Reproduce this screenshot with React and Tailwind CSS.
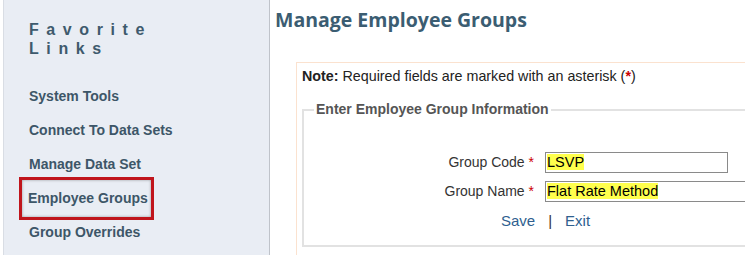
import React from 'react';

const links = ['System Tools', 'Connect To Data Sets', 'Manage Data Set', 'Employee Groups', 'Group Overrides'];

export default function App() {
    return (
        <div className="flex h-[255px] w-[745px] overflow-hidden bg-white pl-[3px] font-['Liberation_Sans',Arial,sans-serif]">
            {/* sidebar */}
            <div className="w-[267px] shrink-0 border-l border-r border-l-[#d9dde4] border-r-[#bfc3ca] bg-[#e9edf4] pt-[20px]">
                <div className="pl-[25px] text-[16px] font-bold leading-[19px] tracking-[7.6px] text-[#3e5a6d]">
                    <div>Favorite</div>
                    <div>Links</div>
                </div>
                <div className="mt-[21px] flex flex-col">
                    {links.map(l => (
                        <div key={l} className="h-[34px] flex items-center pl-[15px]">
                            {l === 'Employee Groups' ? (
                                <span className="border-[3px] border-[#c0151c] pl-[6px] pr-[3px] py-[8px] text-[14px] font-bold text-[#3d5668] shadow-[inset_0_0_3px_rgba(0,0,0,0.35)]">{l}</span>
                            ) : (
                                <span className="pl-[10px] text-[14px] font-bold text-[#3d5668]">{l}</span>
                            )}
                        </div>
                    ))}
                </div>
            </div>

            {/* main */}
            <div className="flex-1 pl-[5px]">
                <h1 className="mt-[7px] font-['Open_Sans',sans-serif] text-[19.5px] font-bold leading-[26px] text-[#3b5d72]">Manage Employee Groups</h1>
                <div className="ml-[21px] mt-[29px] h-[200px] border-l border-t border-[#fbe2cf] pl-[5px] pt-[3px]">
                    <p className="text-[14.3px] text-[#222]"><b>Note:</b> Required fields are marked with an asterisk (<span className="font-bold text-[#c00]">*</span>)</p>
                    <fieldset className="mt-[12px] h-[148px] border-2 border-r-0 border-[#e2e2e2] pl-[10px]">
                        <legend className="px-[2px] text-[14px] font-bold text-[#555]">Enter Employee Group Information</legend>
                        <div className="mt-[32px] grid grid-cols-[220px_1fr] gap-y-[8px] items-center text-[14px] text-[#333]">
                            <div className="text-right">Group Code <span className="text-[#c00]">*</span></div>
                            <div className="pl-[11px]">
                                <div className="h-[21px] w-[183px] border border-[#8a8a8a] px-[1px] text-[14.5px] leading-[19px] text-black"><span className="bg-[#ffff4d]">LSVP</span></div>
                            </div>
                            <div className="text-right">Group Name <span className="text-[#c00]">*</span></div>
                            <div className="pl-[11px]">
                                <div className="h-[21px] w-[260px] border border-[#8a8a8a] px-[1px] text-[14.5px] leading-[19px] text-black"><span className="bg-[#ffff4d]">Flat Rate Method</span></div>
                            </div>
                        </div>
                        <div className="mt-[8px] pl-[187px] text-[15px] text-[#2f5f8f]">
                            Save<span className="mx-[13px] text-[#333]">|</span>Exit
                        </div>
                    </fieldset>
                </div>
            </div>
        </div>
    );
}
